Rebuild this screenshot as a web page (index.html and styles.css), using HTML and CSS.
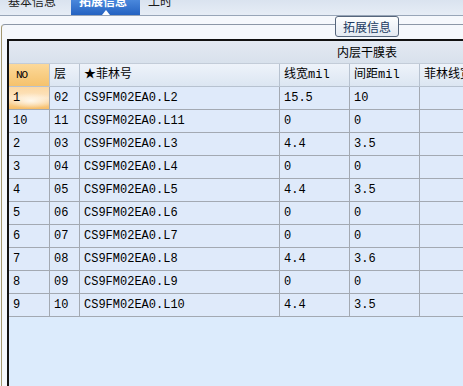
FILE: index.html
```html
<!DOCTYPE html>
<html lang="zh">
<head>
    <meta charset="UTF-8">
    <title>拓展信息</title>
    <link rel="stylesheet" href="styles.css">
</head>
<body>
    <div class="tabs">
        <div class="tab first"><span>基本信息</span></div>
        <div class="tab active"><span>拓展信息</span></div>
        <div class="tab"><span>工时</span></div>
    </div>
    <div class="panel">
        <div class="group">
            <div class="legend">拓展信息</div>
            <div class="grid">
                <div class="band">内层干膜表</div>
                <div class="row head">
                    <div class="no">NO</div>
                    <div>层</div>
                    <div>★菲林号</div>
                    <div>线宽mil</div>
                    <div>间距mil</div>
                    <div>菲林线宽</div>
                </div>
                <div class="row">
                    <div class="cur">1</div><div>02</div><div>CS9FM02EA0.L2</div><div>15.5</div><div>10</div><div></div>
                </div>
                <div class="row">
                    <div>10</div><div>11</div><div>CS9FM02EA0.L11</div><div>0</div><div>0</div><div></div>
                </div>
                <div class="row">
                    <div>2</div><div>03</div><div>CS9FM02EA0.L3</div><div>4.4</div><div>3.5</div><div></div>
                </div>
                <div class="row">
                    <div>3</div><div>04</div><div>CS9FM02EA0.L4</div><div>0</div><div>0</div><div></div>
                </div>
                <div class="row">
                    <div>4</div><div>05</div><div>CS9FM02EA0.L5</div><div>4.4</div><div>3.5</div><div></div>
                </div>
                <div class="row">
                    <div>5</div><div>06</div><div>CS9FM02EA0.L6</div><div>0</div><div>0</div><div></div>
                </div>
                <div class="row">
                    <div>6</div><div>07</div><div>CS9FM02EA0.L7</div><div>0</div><div>0</div><div></div>
                </div>
                <div class="row">
                    <div>7</div><div>08</div><div>CS9FM02EA0.L8</div><div>4.4</div><div>3.6</div><div></div>
                </div>
                <div class="row">
                    <div>8</div><div>09</div><div>CS9FM02EA0.L9</div><div>0</div><div>0</div><div></div>
                </div>
                <div class="row">
                    <div>9</div><div>10</div><div>CS9FM02EA0.L10</div><div>4.4</div><div>3.5</div><div></div>
                </div>
            </div>
        </div>
    </div>
</body>
</html>
```

FILE: styles.css
```css
body {
    margin: 0;
    width: 463px;
    height: 386px;
    overflow: hidden;
    background: #f5f8fc;
    font-family: "Liberation Mono", "Noto Sans CJK SC", monospace;
    font-size: 12px;
    color: #000;
}
.tabs {
    display: flex;
    height: 15px;
    background: linear-gradient(#dae3ef, #e6edf6);
    border-bottom: 1px solid #98a6b8;
    overflow: hidden;
}
.tab {
    position: relative;
    box-sizing: border-box;
    height: 15px;
    padding-left: 8px;
    font-family: "Noto Sans CJK SC", sans-serif;
    font-size: 12px;
    line-height: 12px;
    color: #1a1a1a;
}
.tab span {
    display: block;
    margin-top: -5px;
}
.tab.first {
    width: 71px;
}
.tab.active {
    width: 69px;
    background: linear-gradient(#4a88dc, #2462c1);
    color: #fff;
    font-weight: bold;
}
.tab.active::after {
    content: "";
    position: absolute;
    left: 50%;
    bottom: 0;
    margin-left: -4px;
    border-left: 4px solid transparent;
    border-right: 4px solid transparent;
    border-bottom: 5px solid #fff;
}
.panel {
    padding-top: 8px;
}
.group {
    position: relative;
    margin-left: 1px;
    padding: 14px 0 0 5px;
    border-top: 1px solid #8c97a7;
    border-left: 1px solid #a39870;
    border-top-left-radius: 4px;
}
.legend {
    position: absolute;
    left: 333px;
    top: -9px;
    width: 64px;
    height: 21px;
    box-sizing: border-box;
    border: 1px solid #56667c;
    border-radius: 3px;
    background: linear-gradient(#fdfefe, #e4eaf2);
    font-family: "Noto Sans CJK SC", sans-serif;
    font-size: 12px;
    line-height: 19px;
    text-align: center;
    color: #203a60;
}
.grid {
    height: 360px;
    overflow: hidden;
    border-top: 2px solid #111;
    border-left: 2px solid #111;
    background: #dcebfc;
}
.band {
    height: 23px;
    box-sizing: border-box;
    padding-left: 328px;
    border-bottom: 1px solid #c3ccd8;
    background: linear-gradient(#e3e9f2, #d8e1ec);
    font-family: "Noto Sans CJK SC", sans-serif;
    line-height: 22px;
    white-space: nowrap;
}
.row {
    display: grid;
    grid-template-columns: 41px 30px 200px 70px 70px 80px;
    height: 23px;
}
.row > div {
    box-sizing: border-box;
    padding-left: 4px;
    border-right: 1px solid #a3a9b2;
    border-bottom: 1px solid #a3a9b2;
    background: #dfeafa;
    line-height: 22px;
    white-space: nowrap;
    overflow: hidden;
}
.head > div {
    background: linear-gradient(#eef3fa, #dce6f2);
    border-color: #b7c2d0;
}
.head > div.no {
    padding-left: 7px;
    font-size: 11px;
    letter-spacing: -1px;
    background: linear-gradient(#fcd99a, #f5c26c);
}
.row > div.cur {
    background: radial-gradient(ellipse 60% 35% at 55% 62%, #fff8ec, rgba(255, 248, 236, 0)),
        linear-gradient(#fcd8a2, #fde4c2 50%, #f6bd66);
}
```
